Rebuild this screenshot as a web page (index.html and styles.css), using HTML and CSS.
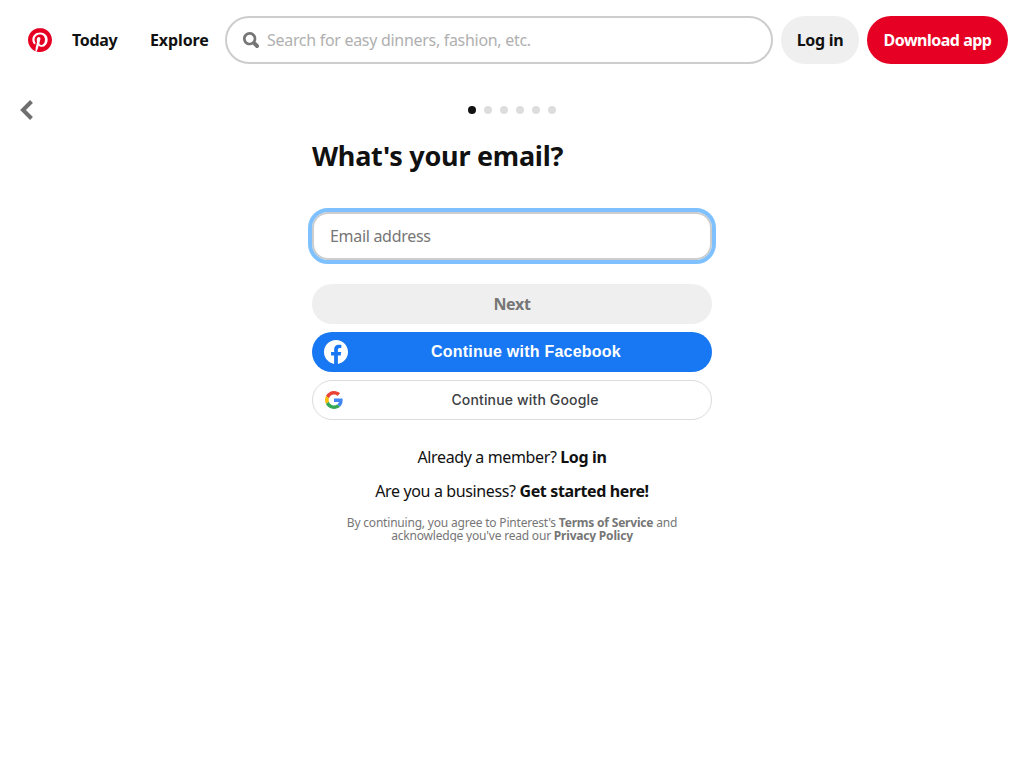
FILE: index.html
```html
<!DOCTYPE html>
<html lang="en">
<head>
    <meta charset="UTF-8">
    <meta name="viewport" content="width=device-width, initial-scale=1.0">
    <title>Pinterest</title>
    <link rel="stylesheet" href="styles.css">
</head>
<body>
    <header class="header">
        <a class="logo" href="#">
            <svg viewBox="0 0 24 24" width="24" height="24"><path fill="#e60023" d="M12.017 0C5.396 0 .029 5.367.029 11.987c0 5.079 3.158 9.417 7.618 11.162-.105-.949-.199-2.403.041-3.439.219-.937 1.406-5.957 1.406-5.957s-.359-.72-.359-1.781c0-1.663.967-2.911 2.168-2.911 1.024 0 1.518.769 1.518 1.688 0 1.029-.653 2.567-.992 3.992-.285 1.193.6 2.165 1.775 2.165 2.128 0 3.768-2.245 3.768-5.487 0-2.861-2.063-4.869-5.008-4.869-3.41 0-5.409 2.562-5.409 5.199 0 1.033.394 2.143.889 2.741.099.12.112.225.085.345-.09.375-.293 1.199-.334 1.363-.053.225-.172.271-.401.165-1.495-.69-2.433-2.878-2.433-4.646 0-3.776 2.748-7.252 7.92-7.252 4.158 0 7.392 2.967 7.392 6.923 0 4.135-2.607 7.462-6.233 7.462-1.214 0-2.354-.629-2.758-1.379l-.749 2.848c-.269 1.045-1.004 2.352-1.498 3.146 1.123.345 2.306.535 3.55.535 6.607 0 11.985-5.365 11.985-11.987C23.97 5.39 18.592.026 11.985.026L12.017 0z"/></svg>
        </a>
        <a class="nav-link nav-today" href="#">Today</a>
        <a class="nav-link nav-explore" href="#">Explore</a>
        <label class="search">
            <svg viewBox="0 0 24 24" width="16" height="16"><path fill="#767676" d="M10 16c-3.31 0-6-2.69-6-6s2.69-6 6-6 6 2.69 6 6-2.69 6-6 6m13.12 2.88l-4.26-4.26A9.842 9.842 0 0 0 20 10c0-5.52-4.48-10-10-10S0 4.48 0 10s4.48 10 10 10c1.71 0 3.32-.44 4.72-1.21l4.28 4.28a2.91 2.91 0 0 0 4.12 0 2.93 2.93 0 0 0 0-4.19"/></svg>
            <input type="text" placeholder="Search for easy dinners, fashion, etc.">
        </label>
        <a class="pill pill-grey" href="#">Log in</a>
        <a class="pill pill-red" href="#">Download app</a>
    </header>

    <div class="steps">
        <a class="back" href="#">
            <svg viewBox="0 0 14 20" width="14" height="20"><polyline points="11.5,1.5 3,10 11.5,18.5" fill="none" stroke="#6f6f6f" stroke-width="4"/></svg>
        </a>
        <div class="dots">
            <span class="dot dot-on"></span>
            <span class="dot"></span>
            <span class="dot"></span>
            <span class="dot"></span>
            <span class="dot"></span>
            <span class="dot"></span>
        </div>
    </div>

    <main class="form">
        <h1>What's your email?</h1>
        <input class="email" type="text" placeholder="Email address">
        <button class="btn btn-next">Next</button>
        <button class="btn btn-fb">
            <svg class="btn-icon" viewBox="0 0 24 24" width="24" height="24"><path fill="#fff" d="M24 12.073c0-6.627-5.373-12-12-12s-12 5.373-12 12c0 5.99 4.388 10.954 10.125 11.854v-8.385H7.078v-3.47h3.047V9.43c0-3.007 1.792-4.669 4.533-4.669 1.312 0 2.686.235 2.686.235v2.953H15.83c-1.491 0-1.956.925-1.956 1.874v2.25h3.328l-.532 3.47h-2.796v8.385C19.612 23.027 24 18.062 24 12.073z"/></svg>
            Continue with Facebook
        </button>
        <button class="btn btn-google">
            <svg class="btn-icon" viewBox="0 0 48 48" width="18" height="18">
                <path fill="#EA4335" d="M24 9.5c3.54 0 6.71 1.22 9.21 3.6l6.85-6.85C35.9 2.38 30.47 0 24 0 14.62 0 6.51 5.38 2.56 13.22l7.98 6.19C12.43 13.72 17.74 9.5 24 9.5z"/>
                <path fill="#4285F4" d="M46.98 24.55c0-1.57-.15-3.09-.38-4.55H24v9.02h12.94c-.58 2.96-2.26 5.48-4.78 7.18l7.73 6c4.51-4.18 7.09-10.36 7.09-17.65z"/>
                <path fill="#FBBC05" d="M10.53 28.59c-.48-1.45-.76-2.99-.76-4.59s.27-3.14.76-4.59l-7.98-6.19C.92 16.46 0 20.12 0 24c0 3.88.92 7.54 2.56 10.78l7.97-6.19z"/>
                <path fill="#34A853" d="M24 48c6.48 0 11.93-2.13 15.89-5.81l-7.73-6c-2.15 1.45-4.92 2.3-8.16 2.3-6.26 0-11.57-4.22-13.47-9.91l-7.98 6.19C6.51 42.62 14.62 48 24 48z"/>
            </svg>
            Continue with Google
        </button>
        <p class="line line-first">Already a member? <b>Log in</b></p>
        <p class="line">Are you a business? <b>Get started here!</b></p>
        <p class="legal">By continuing, you agree to Pinterest's <b>Terms of Service</b> and<br>acknowledge you've read our <b>Privacy Policy</b></p>
    </main>
</body>
</html>
```

FILE: styles.css
```css
html,body{
    margin:0px;
    padding:0px;
}
body{
    background-color:#fff;
    color:#111;
    font-family:"Noto Sans","Open Sans",sans-serif;
    font-size:16px;
}
a{
    color:inherit;
    text-decoration:none;
}
svg{
    display:block;
}
.header{
    height:80px;
    display:flex;
    align-items:center;
    padding:0 16px 0 28px;
    box-sizing:border-box;
}
.logo{
    width:24px;
    margin-right:20px;
}
.nav-link{
    font-weight:700;
    letter-spacing:-.3px;
    white-space:nowrap;
}
.nav-today{
    width:78px;
}
.nav-explore{
    width:75px;
    letter-spacing:-.1px;
}
.search{
    width:548px;
    height:48px;
    box-sizing:border-box;
    display:flex;
    align-items:center;
    gap:8px;
    padding:0 20px 0 16px;
    border:2px solid #cdcdcd;
    border-radius:24px;
}
.search input{
    flex:1;
    min-width:0;
    border:0;
    outline:0;
    padding:0;
    font-family:inherit;
    font-size:16px;
    letter-spacing:-.3px;
}
.search input::placeholder{
    color:#b0b0b0;
    opacity:1;
}
.pill{
    height:48px;
    display:flex;
    align-items:center;
    justify-content:center;
    border-radius:24px;
    font-weight:700;
    letter-spacing:-.3px;
    white-space:nowrap;
}
.pill-grey{
    width:78px;
    margin-left:8px;
    background-color:#efefef;
}
.pill-red{
    width:141px;
    margin-left:8px;
    background-color:#e60023;
    color:#fff;
    letter-spacing:-.5px;
}
.steps{
    height:60px;
    position:relative;
    display:flex;
    align-items:center;
    justify-content:center;
}
.back{
    position:absolute;
    left:20px;
    top:20px;
}
.dots{
    display:flex;
    gap:8px;
}
.dot{
    width:8px;
    height:8px;
    border-radius:50%;
    background-color:#ddd;
}
.dot-on{
    background-color:#111;
}
.form{
    width:400px;
    margin:0 auto;
    display:flex;
    flex-direction:column;
}
.form h1{
    margin:0 0 40px;
    font-size:27px;
    line-height:32px;
    font-weight:700;
    letter-spacing:-.25px;
}
.email{
    height:48px;
    box-sizing:border-box;
    padding:0 16px;
    border:2px solid #cdcdcd;
    border-radius:16px;
    outline:4px solid #7fc1ff;
    font-family:inherit;
    font-size:16px;
    letter-spacing:-.3px;
    margin-bottom:24px;
}
.email::placeholder{
    color:#767676;
    opacity:1;
}
.btn{
    height:40px;
    border:0;
    border-radius:20px;
    position:relative;
    padding:0;
    margin-bottom:8px;
    font-size:16px;
    font-weight:700;
}
.btn-icon{
    position:absolute;
    top:50%;
    transform:translateY(-50%);
    left:12px;
}
.btn-next{
    background-color:#efefef;
    color:#767676;
    font-family:inherit;
    letter-spacing:-.3px;
}
.btn-fb{
    background-color:#1877f2;
    color:#fff;
    font-family:"Liberation Sans",sans-serif;
    letter-spacing:.23px;
    padding-left:28px;
}
.btn-google{
    background-color:#fff;
    border:1px solid #dadce0;
    color:#3c4043;
    font-family:Inter,sans-serif;
    font-size:14px;
    font-weight:500;
    letter-spacing:.15px;
    padding:0 0 2px 26px;
    margin-bottom:0;
}
.line{
    margin:0;
    height:34px;
    line-height:34px;
    text-align:center;
    letter-spacing:-.37px;
}
.line-first{
    margin-top:20px;
}
.legal{
    margin:8px 0 0;
    font-size:12px;
    line-height:13px;
    color:#767676;
    text-align:center;
    letter-spacing:-.2px;
}
```
